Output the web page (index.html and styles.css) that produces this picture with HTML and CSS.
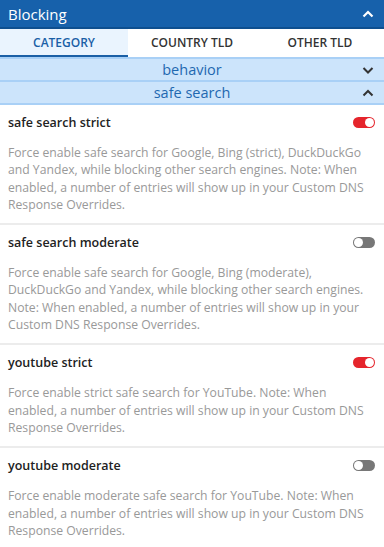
FILE: index.html
```html
<!DOCTYPE html>
<html>
<head>
<meta charset="utf-8">
<link rel="stylesheet" href="styles.css">
</head>
<body>
<div class="panel">
  <div class="header">
    <span class="header-title">Blocking</span>
    <svg class="chev" width="14" height="10" viewBox="0 0 14 10"><path d="M2.5 7.5 L7 3 L11.5 7.5" fill="none" stroke="#fff" stroke-width="2.2"/></svg>
  </div>
  <div class="tabs">
    <div class="tab active">CATEGORY</div>
    <div class="tab">COUNTRY TLD</div>
    <div class="tab">OTHER TLD</div>
  </div>
  <div class="group">
    <span class="group-title">behavior</span>
    <svg class="chev" width="14" height="10" viewBox="0 0 14 10"><path d="M2.5 3 L7 7.5 L11.5 3" fill="none" stroke="#333" stroke-width="2"/></svg>
  </div>
  <div class="group">
    <span class="group-title">safe search</span>
    <svg class="chev" width="14" height="10" viewBox="0 0 14 10"><path d="M2.5 7.5 L7 3 L11.5 7.5" fill="none" stroke="#333" stroke-width="2"/></svg>
  </div>
  <div class="item">
    <div class="item-head"><span class="item-title">safe search strict</span><span class="toggle on"></span></div>
    <p class="desc">Force enable safe search for Google, Bing (strict), DuckDuckGo and Yandex, while blocking other search engines. Note: When enabled, a number of entries will show up in your Custom DNS Response Overrides.</p>
  </div>
  <div class="item">
    <div class="item-head"><span class="item-title">safe search moderate</span><span class="toggle"></span></div>
    <p class="desc">Force enable safe search for Google, Bing (moderate), DuckDuckGo and Yandex, while blocking other search engines. Note: When enabled, a number of entries will show up in your Custom DNS Response Overrides.</p>
  </div>
  <div class="item">
    <div class="item-head"><span class="item-title">youtube strict</span><span class="toggle on"></span></div>
    <p class="desc">Force enable strict safe search for YouTube. Note: When enabled, a number of entries will show up in your Custom DNS Response Overrides.</p>
  </div>
  <div class="item">
    <div class="item-head"><span class="item-title">youtube moderate</span><span class="toggle"></span></div>
    <p class="desc">Force enable moderate safe search for YouTube. Note: When enabled, a number of entries will show up in your Custom DNS Response Overrides.</p>
  </div>
</div>
</body>
</html>
```
FILE: styles.css
```css
html, body {
  margin: 0;
  padding: 0;
  background: #fff;
}
body {
  font-family: "Open Sans", "Liberation Sans", sans-serif;
  width: 384px;
  overflow: hidden;
}
.panel {
  display: flex;
  flex-direction: column;
}
.header {
  height: 27px;
  background: #1761ab;
  border-bottom: 2px solid #0e4f8f;
  display: flex;
  align-items: center;
  justify-content: space-between;
  padding: 0 9px 0 8px;
}
.header-title {
  color: #fff;
  font-size: 15px;
}
.chev { display: block; }
.tabs {
  display: grid;
  grid-template-columns: repeat(3, 1fr);
  height: 28px;
}
.tab {
  display: flex;
  align-items: center;
  justify-content: center;
  font-size: 12px;
  font-weight: 600;
  color: #333;
  border-bottom: 2px solid transparent;
  padding-top: 1px;
}
.tab.active {
  background: #eaf4fe;
  color: #1a5fa6;
  border-bottom-color: #1a5fa6;
}
.group {
  height: 21px;
  background: #cce4fb;
  border-top: 2px solid #a9d0f6;
  display: flex;
  align-items: center;
  justify-content: center;
  position: relative;
}
.group-title {
  color: #1f68b0;
  font-size: 14.5px;
}
.group .chev {
  position: absolute;
  right: 9px;
  top: 6px;
}
.item {
  border-top: 2px solid #ececec;
  padding: 8px 9px 10px 8px;
}
.group + .item { border-top: 2px solid #a9d0f6; }
.item-head {
  display: flex;
  align-items: center;
  justify-content: space-between;
  height: 18px;
}
.item-title {
  font-size: 12.5px;
  font-weight: 600;
  color: #222;
}
.toggle {
  width: 22px;
  height: 11px;
  border-radius: 6px;
  background: #777;
  position: relative;
}
.toggle::after {
  content: "";
  position: absolute;
  top: 1px;
  left: 1px;
  width: 9px;
  height: 9px;
  border-radius: 50%;
  background: #fff;
}
.toggle.on { background: #e5252c; }
.toggle.on::after { left: 12px; }
.desc {
  margin: 13px 0 0 0;
  font-size: 12.2px;
  line-height: 17.3px;
  color: #999;
}
```
